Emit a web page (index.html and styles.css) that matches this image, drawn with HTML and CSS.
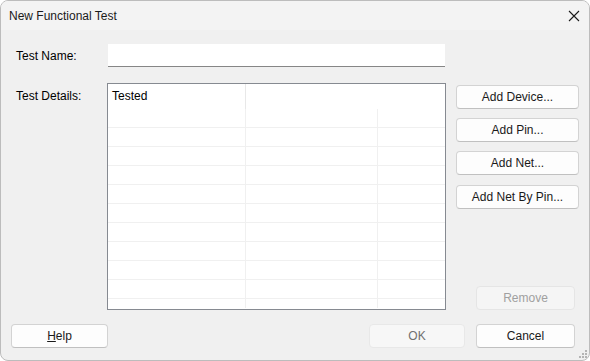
FILE: index.html
```html
<!DOCTYPE html>
<html lang="en">
<head>
  <meta charset="UTF-8" />
  <title>New Functional Test</title>
  <link rel="stylesheet" href="styles.css">
</head>
<body>
  <div class="window">
    <div class="titlebar">
      <span class="title">New Functional Test</span>
      <svg class="close" width="12" height="12" viewBox="0 0 12 12">
        <path d="M1 1 L11 11 M11 1 L1 11" stroke="#1b1b1b" stroke-width="1.1" fill="none" />
      </svg>
    </div>

    <div class="content">
      <div class="row-name">
        <label>Test Name:</label>
        <input type="text" class="name-input" />
      </div>

      <div class="row-details">
        <label class="details-label">Test Details:</label>

        <div class="grid">
          <div class="grid-head">
            <div class="head-cell">Tested</div>
            <div class="head-rest"></div>
          </div>
          <div class="grid-row"><div class="c1"></div><div class="c2"></div><div class="c3"></div></div>
          <div class="grid-row"><div class="c1"></div><div class="c2"></div><div class="c3"></div></div>
          <div class="grid-row"><div class="c1"></div><div class="c2"></div><div class="c3"></div></div>
          <div class="grid-row"><div class="c1"></div><div class="c2"></div><div class="c3"></div></div>
          <div class="grid-row"><div class="c1"></div><div class="c2"></div><div class="c3"></div></div>
          <div class="grid-row"><div class="c1"></div><div class="c2"></div><div class="c3"></div></div>
          <div class="grid-row"><div class="c1"></div><div class="c2"></div><div class="c3"></div></div>
          <div class="grid-row"><div class="c1"></div><div class="c2"></div><div class="c3"></div></div>
          <div class="grid-row"><div class="c1"></div><div class="c2"></div><div class="c3"></div></div>
          <div class="grid-row"><div class="c1"></div><div class="c2"></div><div class="c3"></div></div>
          <div class="grid-row last"><div class="c1"></div><div class="c2"></div><div class="c3"></div></div>
        </div>

        <div class="side">
          <button class="btn side-btn">Add Device...</button>
          <button class="btn side-btn">Add Pin...</button>
          <button class="btn side-btn">Add Net...</button>
          <button class="btn side-btn">Add Net By Pin...</button>
          <button class="btn remove" disabled>Remove</button>
        </div>
      </div>
    </div>

    <div class="footer">
      <button class="btn help"><u>H</u>elp</button>
      <button class="btn ok" disabled>OK</button>
      <button class="btn cancel">Cancel</button>
    </div>

    <svg class="grip" width="10" height="10" viewBox="0 0 10 10">
      <rect x="7" y="1" width="2" height="2" fill="#b4b4b4" />
      <rect x="4" y="4" width="2" height="2" fill="#b4b4b4" />
      <rect x="7" y="4" width="2" height="2" fill="#b4b4b4" />
      <rect x="1" y="7" width="2" height="2" fill="#b4b4b4" />
      <rect x="4" y="7" width="2" height="2" fill="#b4b4b4" />
      <rect x="7" y="7" width="2" height="2" fill="#b4b4b4" />
    </svg>
  </div>
</body>
</html>
```

FILE: styles.css
```css
body {
  margin: 0;
  background: #ffffff;
  font-family: "Segoe UI", "Liberation Sans", Arial, sans-serif;
  font-size: 12px;
  color: #000000;
}

.window {
  position: relative;
  width: 590px;
  height: 361px;
  box-sizing: border-box;
  border: 1px solid #bcbcbc;
  border-radius: 8px;
  background: #f0f0f0;
  overflow: hidden;
}

.titlebar {
  display: flex;
  align-items: center;
  justify-content: space-between;
  height: 29px;
  padding: 0 9px 0 8px;
  background: #f3f3f3;
}

.title {
  font-size: 12px;
  color: #1a1a1a;
}

.close {
  margin-top: 1px;
}

.content {
  padding: 14px 10px 0 15px;
}

.row-name {
  display: flex;
  align-items: center;
}

.row-name label {
  width: 92px;
}

.name-input {
  width: 337px;
  height: 23px;
  box-sizing: border-box;
  margin: 0;
  padding: 0 4px;
  border: none;
  border-bottom: 1px solid #868686;
  background: #ffffff;
  font: inherit;
}

.row-details {
  display: flex;
  margin-top: 16px;
}

.details-label {
  width: 91px;
  line-height: 25px;
  margin-top: 1px;
}

.grid {
  width: 339px;
  height: 227px;
  box-sizing: border-box;
  border: 1px solid #868a91;
  background: #ffffff;
  overflow: hidden;
}

.grid-head {
  display: flex;
  height: 25px;
}

.head-cell {
  width: 133px;
  padding-left: 4px;
  line-height: 25px;
  border-right: 1px solid #e8e8e8;
}

.grid-row {
  display: flex;
  height: 18px;
  border-bottom: 1px solid #f0f0f0;
}

.grid-row.last {
  height: 9px;
  border-bottom: none;
}

.c1 {
  width: 137px;
  border-right: 1px solid #f0f0f0;
}

.c2 {
  width: 131px;
  border-right: 1px solid #f0f0f0;
}

.c3 {
  flex: 1;
}

.side {
  display: flex;
  flex-direction: column;
  width: 123px;
  margin-left: 10px;
  padding-top: 2px;
  box-sizing: border-box;
}

.btn {
  height: 24px;
  box-sizing: border-box;
  margin: 0;
  padding: 0;
  border: 1px solid #d3d3d3;
  border-bottom-color: #c0c0c0;
  border-radius: 4px;
  background: #fdfdfd;
  font: inherit;
  color: #1a1a1a;
}

.side-btn {
  width: 123px;
  margin-bottom: 9px;
}

.side-btn:nth-child(3) {
  margin-bottom: 10px;
}

.remove {
  width: 99px;
  margin-top: auto;
  margin-left: 20px;
  background: #f5f5f5;
  border-color: #e5e5e5;
  color: #a0a0a0;
}

.footer {
  display: flex;
  margin-top: 14px;
  padding: 0 14px 0 10px;
}

.help {
  width: 97px;
}

.ok {
  width: 96px;
  margin-left: auto;
  margin-right: 11px;
  background: #f7f7f7;
  border-color: #e8e8e8;
  color: #707070;
}

.cancel {
  width: 99px;
}

.grip {
  position: absolute;
  right: 1px;
  bottom: 1px;
}
```
